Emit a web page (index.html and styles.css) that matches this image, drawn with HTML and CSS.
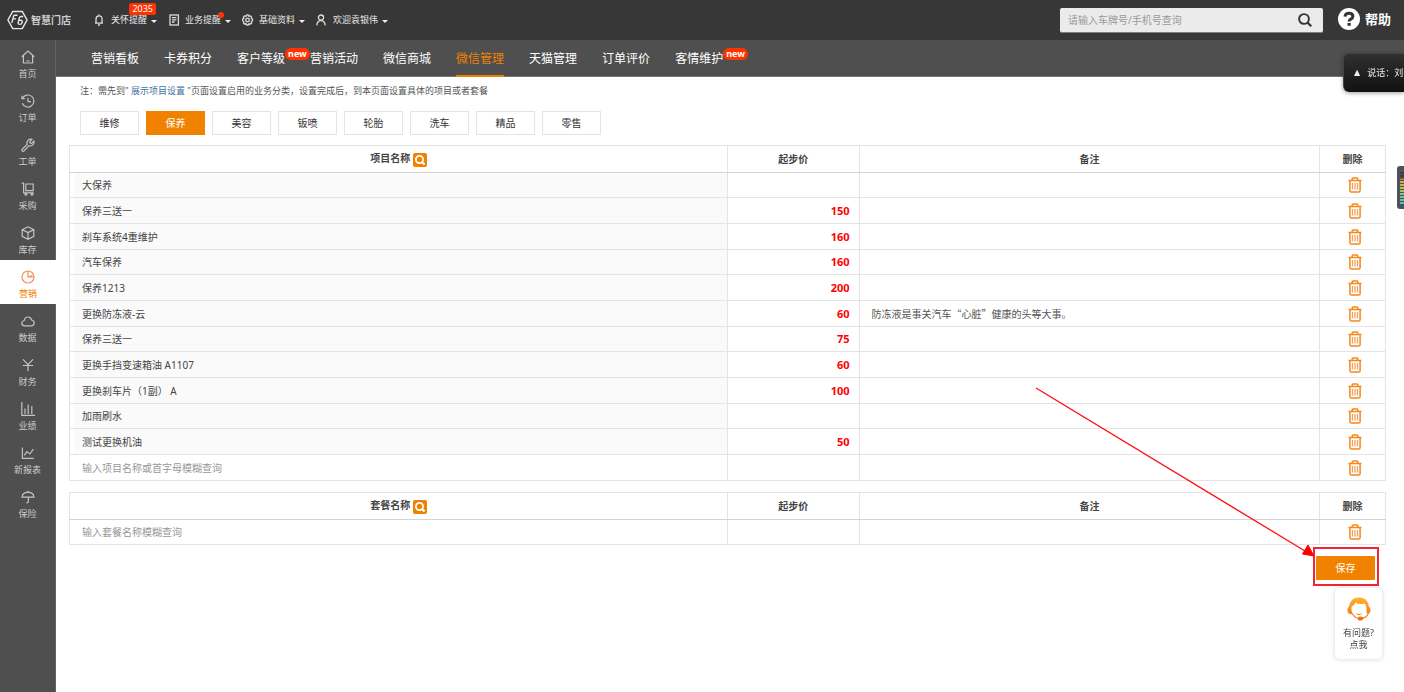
FILE: index.html
```html
<!DOCTYPE html>
<html lang="zh-CN">
<head>
<meta charset="utf-8">
<meta name="viewport" content="width=device-width, initial-scale=1">
<title>智慧门店 - 微信管理</title>
<link rel="stylesheet" href="styles.css">
</head>
<body>
<svg class="sprite" aria-hidden="true">
  <symbol id="trash" viewBox="0 0 14 16">
    <path d="M0.5 3.5H13.5M4.2 3.2V1.8Q4.2 0.9 5.1 0.9H8.9Q9.8 0.9 9.8 1.8V3.2M1.9 3.8V13.4Q1.9 15 3.4 15H10.6Q12.1 15 12.1 13.4V3.8" fill="none" stroke="#f5881a" stroke-width="1.5"/>
    <path d="M4.5 6V12.4M7 6V12.4M9.5 6V12.4" stroke="#f3a060" stroke-width="1.3"/>
  </symbol>
  <symbol id="find" viewBox="0 0 14 14">
    <rect width="14" height="14" rx="2" fill="#f18200"/>
    <circle cx="6.5" cy="6.5" r="3.6" fill="none" stroke="#fff" stroke-width="1.8"/>
    <path d="M9.2 9.2L11.6 11.6" stroke="#fff" stroke-width="2.1"/>
  </symbol>
</svg>

<header class="topbar">
  <a class="brand" href="#">
    <svg class="brand-mark" viewBox="0 0 22 20" fill="none" stroke="#e6e6e6" stroke-width="1.5" aria-hidden="true">
      <path d="M6 1H16L21 10L16 19H6L1 10Z"/>
      <path d="M11 5H8.2Q7.2 5 6.9 6L5 13M6.4 8.8H9.4M17 6.4H14.6Q13.4 6.4 13 7.7L11.8 12.4Q11.4 14.6 13.4 14.6Q15.4 14.6 15.9 12.4Q16.4 10.3 14.6 10.3H12.6"/>
    </svg>
    <span>智慧门店</span>
  </a>
  <div class="menus">
    <button class="menu">
      <svg viewBox="0 0 12 12"><path d="M1 9.200H9M2 9V5Q2 1.800 5 1.800T8 5V9M5 .4V2M4 11H6"/></svg>
      <span>关怀提醒<b class="count">2035</b></span><i class="caret"></i>
    </button>
    <button class="menu">
      <svg viewBox="0 0 12 12"><rect x="2" y="1" width="8.4" height="10"/><path d="M4 3.7H8.4M4 5.8H8.4M4 8H6.6"/></svg>
      <span>业务提醒<b class="dot"></b></span><i class="caret"></i>
    </button>
    <button class="menu">
      <svg viewBox="0 0 12 12"><path d="M5 .8H6.2L6.9 2.2L8.5 1.9L9.5 2.9L9.2 4.3L10.5 5.2V6.7L9.3 7.5L9.6 9L8.6 10L7 9.8L6.2 11H4.9L4.1 9.8L2.5 10L1.5 9L1.8 7.5L.6 6.7V5.2L1.8 4.3L1.5 2.9L2.5 1.9L4.1 2.2Z"/><circle cx="5.5" cy="6" r="1.8"/></svg>
      <span>基础资料</span><i class="caret"></i>
    </button>
    <button class="menu">
      <svg viewBox="0 0 12 12"><circle cx="5" cy="3.6" r="2.6"/><path d="M.8 11.4Q1 7 5 6.3Q9 7 9.2 11.4"/></svg>
      <span>欢迎袁银伟</span><i class="caret"></i>
    </button>
  </div>
  <form class="search">
    <input type="text" aria-label="查询" placeholder="请输入车牌号/手机号查询">
    <button type="button" aria-label="搜索"><svg viewBox="0 0 14 14" fill="none" stroke="#333"><circle cx="6" cy="6" r="4.9" stroke-width="1.9"/><path d="M9.5 9.5L13.3 13.3" stroke-width="2.2"/></svg></button>
  </form>
  <a class="help" href="#">
    <svg viewBox="0 0 22 22" aria-hidden="true"><circle cx="11" cy="11" r="11" fill="#fff"/><path d="M7 8.7Q7.2 5.2 11 5.2Q14.9 5.2 14.9 8.2Q14.9 9.8 12.8 11.1Q11.1 12.1 11.1 13.6" fill="none" stroke="#373737" stroke-width="3"/><rect x="9.5" y="15" width="3.2" height="2.8" fill="#373737"/></svg>
    <span>帮助</span>
  </a>
</header>

<div class="layout">
  <nav class="side" aria-label="主菜单">
    <a href="#"><svg viewBox="0 0 14 14"><path d="M.8 6.8L7 1L13.2 6.8M2.4 5.6V13H11.6V5.6M5.4 11H8.6"/></svg>首页</a>
    <a href="#"><svg viewBox="0 0 14 14"><path d="M1.7 4A6 6 0 1 1 1.3 9.2M1 1.8V4.6H3.8M7 4V7.6H10"/></svg>订单</a>
    <a href="#"><svg viewBox="0 0 14 14"><path d="M1.2 11.2L6.2 6.4Q5.4 3.6 7.4 1.9Q9 .7 11 1.3L8.8 3.6L9.2 5L10.6 5.4L12.9 3.1Q13.4 5.4 11.8 6.9Q10.1 8.4 7.8 7.8L3 13Q1.9 13.7 1.1 12.9Q.5 12.1 1.2 11.2Z"/></svg>工单</a>
    <a href="#"><svg viewBox="0 0 14 14"><path d="M.6 1.2H2.6V10.8H12.8M4.8 2H12.2V8.6H4.8Z"/><circle cx="4.8" cy="12.3" r=".9"/><circle cx="11" cy="12.3" r=".9"/></svg>采购</a>
    <a href="#"><svg viewBox="0 0 14 14"><path d="M7 .8L12.8 3.6V10.4L7 13.3L1.2 10.4V3.6ZM1.2 3.6L7 6.5L12.8 3.6M7 6.5V13.3"/></svg>库存</a>
    <a class="active" href="#" aria-current="page"><svg viewBox="0 0 14 14"><circle cx="7" cy="7" r="6"/><path d="M7 1V7L11.5 5.6M7 7H13"/></svg>营销</a>
    <a href="#"><svg viewBox="0 0 14 14"><path d="M3.6 11.8Q.8 11.6.8 9Q1 6.8 3.2 6.5Q3.8 3 7 3Q9.8 3 10.6 6Q13.2 6.5 13.2 9Q13 11.6 10.6 11.8Z"/></svg>数据</a>
    <a href="#"><svg viewBox="0 0 14 14"><path d="M2 1.4L7 6.6L12 1.4M7 6.600V13M1.800 7.500H12.200"/></svg>财务</a>
    <a href="#"><svg viewBox="0 0 14 14"><path d="M.8 0V13.3H14M4 12V6.6M7.2 12V2.600M10.8 12V4"/></svg>业绩</a>
    <a href="#"><svg viewBox="0 0 14 14"><path d="M1.4 1.4V12.4H12.8M3.4 9.4L5.8 5.6L8.8 8L12.4 3.2"/></svg>新报表</a>
    <a href="#"><svg viewBox="0 0 14 14"><path d="M1 7.2Q1.4 2.6 7 2.2Q12.6 2.6 13 7.2ZM7 .8V2M7.4 7.2V11.6Q7.2 13 5.4 12.6"/></svg>保险</a>
  </nav>

  <div class="page">
    <nav class="subnav" aria-label="营销">
      <a href="#">营销看板</a>
      <a href="#">卡券积分</a>
      <a href="#">客户等级<b class="new">new</b></a>
      <a href="#">营销活动</a>
      <a href="#">微信商城</a>
      <a class="active" href="#" aria-current="page">微信管理</a>
      <a href="#">天猫管理</a>
      <a href="#">订单评价</a>
      <a href="#">客情维护<b class="new">new</b></a>
    </nav>

    <main>
      <p class="note">注：需先到" <a href="#">展示项目设置</a> "页面设置启用的业务分类，设置完成后，到本页面设置具体的项目或者套餐</p>
      <div class="tabs">
        <button>维修</button>
        <button class="active">保养</button>
        <button>美容</button>
        <button>钣喷</button>
        <button>轮胎</button>
        <button>洗车</button>
        <button>精品</button>
        <button>零售</button>
      </div>

      <table class="grid">
        <thead><tr>
          <th class="col-name">项目名称 <button class="icon-btn" aria-label="查询项目"><svg class="find"><use href="#find"/></svg></button></th>
          <th class="col-price">起步价</th><th class="col-memo">备注</th><th class="col-del">删除</th>
        </tr></thead>
        <tbody>
          <tr><td class="name">大保养</td><td class="price"></td><td class="memo"></td><td class="del"><button class="icon-btn" aria-label="删除"><svg class="trash"><use href="#trash"/></svg></button></td></tr>
          <tr><td class="name">保养三送一</td><td class="price">150</td><td class="memo"></td><td class="del"><button class="icon-btn" aria-label="删除"><svg class="trash"><use href="#trash"/></svg></button></td></tr>
          <tr><td class="name">刹车系统4重维护</td><td class="price">160</td><td class="memo"></td><td class="del"><button class="icon-btn" aria-label="删除"><svg class="trash"><use href="#trash"/></svg></button></td></tr>
          <tr><td class="name">汽车保养</td><td class="price">160</td><td class="memo"></td><td class="del"><button class="icon-btn" aria-label="删除"><svg class="trash"><use href="#trash"/></svg></button></td></tr>
          <tr><td class="name">保养1213</td><td class="price">200</td><td class="memo"></td><td class="del"><button class="icon-btn" aria-label="删除"><svg class="trash"><use href="#trash"/></svg></button></td></tr>
          <tr><td class="name">更换防冻液-云</td><td class="price">60</td><td class="memo">防冻液是事关汽车“心脏”健康的头等大事。</td><td class="del"><button class="icon-btn" aria-label="删除"><svg class="trash"><use href="#trash"/></svg></button></td></tr>
          <tr><td class="name">保养三送一</td><td class="price">75</td><td class="memo"></td><td class="del"><button class="icon-btn" aria-label="删除"><svg class="trash"><use href="#trash"/></svg></button></td></tr>
          <tr><td class="name">更换手挡变速箱油 A1107</td><td class="price">60</td><td class="memo"></td><td class="del"><button class="icon-btn" aria-label="删除"><svg class="trash"><use href="#trash"/></svg></button></td></tr>
          <tr><td class="name">更换刹车片（1副） A</td><td class="price">100</td><td class="memo"></td><td class="del"><button class="icon-btn" aria-label="删除"><svg class="trash"><use href="#trash"/></svg></button></td></tr>
          <tr><td class="name">加雨刷水</td><td class="price"></td><td class="memo"></td><td class="del"><button class="icon-btn" aria-label="删除"><svg class="trash"><use href="#trash"/></svg></button></td></tr>
          <tr><td class="name">测试更换机油</td><td class="price">50</td><td class="memo"></td><td class="del"><button class="icon-btn" aria-label="删除"><svg class="trash"><use href="#trash"/></svg></button></td></tr>
          <tr><td class="entry"><input type="text" aria-label="项目名称" placeholder="输入项目名称或首字母模糊查询"></td><td class="price"></td><td class="memo"></td><td class="del"><button class="icon-btn" aria-label="删除"><svg class="trash"><use href="#trash"/></svg></button></td></tr>
        </tbody>
      </table>

      <table class="grid">
        <thead><tr>
          <th class="col-name">套餐名称 <button class="icon-btn" aria-label="查询套餐"><svg class="find"><use href="#find"/></svg></button></th>
          <th class="col-price">起步价</th><th class="col-memo">备注</th><th class="col-del">删除</th>
        </tr></thead>
        <tbody>
          <tr><td class="entry"><input type="text" aria-label="套餐名称" placeholder="输入套餐名称模糊查询"></td><td class="price"></td><td class="memo"></td><td class="del"><button class="icon-btn" aria-label="删除"><svg class="trash"><use href="#trash"/></svg></button></td></tr>
        </tbody>
      </table>

      <div class="actions">
        <div class="marked">
          <button class="save">保存</button>
          <svg class="arrow" viewBox="0 0 280 170" aria-hidden="true"><path d="M1 1L270 164" stroke="#f11" stroke-width="1.4"/><path d="M279 169L267.500 167L273 158Z" fill="#f00" stroke="#f00"/></svg>
        </div>
      </div>
    </main>
  </div>
</div>

<button class="speech"><span class="up">▲</span><span>说话：刘</span></button>
<div class="meter" aria-hidden="true"><span></span></div>
<button class="chat">
  <svg viewBox="0 0 24 24" aria-hidden="true">
    <defs><linearGradient id="hair" x2="0" y2="1"><stop stop-color="#ffb52b"/><stop offset="1" stop-color="#f67f1e"/></linearGradient></defs>
    <path d="M3 17Q.4 16.500 .4 13Q.4 10.500 2 9.800Q3.300 .5 12 .5Q20.700 .5 22 9.800Q23.600 10.500 23.600 13Q23.600 16 21 17L19.500 15.500Q20 10 18 6.500Q11.500 8 8.500 5.500Q7.500 8.500 4.500 9.500Q4 13 5.500 17Q4 17.500 3 17Z" fill="url(#hair)"/>
    <path d="M21.500 15.500Q20 21 14.500 21.500M5.200 16.500Q7 20 10 21" fill="none" stroke="#f58220" stroke-width="1.2"/>
    <ellipse cx="13.300" cy="21.500" rx="2.800" ry="2" fill="#f0701d"/>
    <path d="M9.500 16.800Q12 18.500 14.500 16.800" fill="none" stroke="#f58220"/>
  </svg>
  <span>有问题?</span><span>点我</span>
</button>
</body>
</html>
```

FILE: styles.css
```css
* { box-sizing: border-box; }
body {
  margin: 0;
  min-height: 100vh;
  display: flex;
  flex-direction: column;
  background: #fff;
  color: #444;
  font: 10px/14px "Noto Sans", "Noto Sans CJK SC", sans-serif;
}
a { color: inherit; text-decoration: none; }
button, input { font: inherit; color: inherit; border: 0; padding: 0; background: none; }
button { cursor: pointer; }
.sprite { position: absolute; width: 0; height: 0; }

/* Top bar */
.topbar {
  display: flex;
  align-items: center;
  height: 40px;
  padding: 0 13px 0 7px;
  background: #373737;
  color: #e8e8e8;
}
.brand { display: flex; align-items: center; gap: 3px; width: 87px; font-weight: 700; color: #ccc; }
.brand-mark { width: 21px; height: 20px; }
.menus { display: flex; gap: 11px; font-size: 9px; line-height: 12px; }
.menu { display: flex; align-items: center; }
.menu svg { width: 12px; height: 12px; margin-right: 5px; fill: none; stroke: #ddd; stroke-width: 1.3; }
.menu span { position: relative; }
.caret { margin: 3px 0 0 4px; border: 3px solid transparent; border-top-color: #eee; border-bottom: 0; }
.count {
  position: absolute;
  top: -11px;
  right: -9px;
  padding: 0 3px;
  border-radius: 2px;
  background: #ff3300;
  color: #fff;
  font-weight: 400;
  line-height: 12px;
}
.dot { position: absolute; top: -2px; right: -3px; width: 6px; height: 6px; border-radius: 50%; background: #ff3300; }
.search {
  display: flex;
  align-items: center;
  width: 263px;
  height: 25px;
  margin-left: auto;
  padding: 0 11px 0 8px;
  border-radius: 2px;
  background: #ebebeb;
  color: #333;
  border-bottom: 1px solid #71828c;
}
.search input { flex: 1; min-width: 0; outline: 0; }
.search svg { display: block; width: 14px; height: 14px; }
.help { display: flex; align-items: center; gap: 5px; margin-left: 15px; padding-bottom: 3px; color: #fff; font-size: 13px; font-weight: 700; }
.help svg { width: 22px; height: 22px; }
::placeholder { color: #999; opacity: 1; }

/* Sidebar */
.layout { display: flex; flex: 1; }
.side { width: 56px; flex: none; background: #4f4f4f; border-right: 1px solid #636363; color: #ccc; font-size: 9px; }
.side a { display: flex; flex-direction: column; align-items: center; gap: 3px; height: 44px; padding-top: 10px; line-height: 13px; }
.side svg { width: 14px; height: 14px; fill: none; stroke: #c4c4c4; stroke-width: 1.2; }
.side .active { background: #fff; color: #f18200; margin-right: -1px; }
.side .active svg { stroke: #f58f62; }

/* Section navigation */
.page { flex: 1; min-width: 0; }
.subnav {
  display: flex;
  gap: 25px;
  height: 37px;
  padding-left: 35px;
  background: #4f4f4f;
  border-bottom: 1px solid #757575;
  color: #fff;
  font-size: 12px;
  line-height: 38px;
}
.subnav a { position: relative; }
.subnav .active { color: #f18200; height: 37px; border-bottom: 2px solid #f18200; }
.new {
  position: absolute;
  top: 8px;
  left: 48px;
  padding: 0 3px;
  border-radius: 7px;
  background: #ff3300;
  font-size: 9px;
  line-height: 12px;
}

main { padding: 6px 18px 0 13px; }
.note { margin: 0 0 13px 11px; font-size: 9px; line-height: 15px; color: #555; }
.note a { color: #40719c; }
.tabs { display: flex; gap: 7px; margin: 0 0 10px 11px; }
.tabs button { width: 59px; height: 24px; border: 1px solid #e4e4e4; background: #fff; color: #333; }
.tabs .active { background: #f18200; border-color: #f18200; color: #fff; }

/* Data tables */
.grid { width: 100%; margin-bottom: 11px; border-collapse: collapse; table-layout: fixed; }
.grid th, .grid td { border: 1px solid #e4e4e4; padding: 0; }
.grid th { height: 27px; border-bottom-color: #d4d4d4; color: #444; font-weight: 700; }
.grid td { height: 26px; }
.grid tr:nth-child(3n+1) td { height: 25px; }
.col-name { width: 50%; }
.col-price { width: 10%; }
.col-memo { width: 35%; }
.col-del { width: 5%; }
.grid .name { padding-left: 12px; background: linear-gradient(to right, #fff 4px, #fafafa 4px); }
.grid .entry { padding-left: 12px; }
.entry input { display: block; width: 100%; height: 14px; outline: 0; }
.grid .price { padding-right: 9px; text-align: right; color: #f00; font-size: 11px; font-weight: 700; }
.grid .memo { padding-left: 12px; color: #555; font-family: "Noto Sans CJK SC", sans-serif; }
.grid .del { padding-left: 4px; text-align: center; }
.icon-btn { vertical-align: middle; }
.icon-btn svg { display: block; }
.find { width: 14px; height: 14px; }
.trash { width: 14px; height: 16px; }

.actions { display: flex; justify-content: flex-end; margin-top: -9px; padding-right: 7px; }
.marked { position: relative; padding: 7px 2px 4px 1px; border: 2px solid #f22435; }
.save { display: block; width: 59px; height: 24px; border-radius: 1px; background: #f18200; color: #fff; }
.arrow { position: absolute; right: 62px; bottom: 27px; width: 280px; height: 170px; pointer-events: none; }

/* Floating widgets */
.speech {
  position: fixed;
  top: 53px;
  right: 0;
  width: 61px;
  height: 39px;
  display: flex;
  align-items: center;
  gap: 7px;
  padding-left: 10px;
  overflow: hidden;
  white-space: nowrap;
  border: solid #444;
  border-width: 1px 0 0 1px;
  border-radius: 6px 0 0 6px;
  background: linear-gradient(#303030, #111);
  box-shadow: 0 1px 4px rgba(0, 0, 0, .4);
  color: #eee;
  font-size: 9px;
}
.up { font-size: 8px; font-family: "DejaVu Sans", sans-serif; }
.meter { position: fixed; top: 166px; right: 0; width: 7px; height: 43px; padding: 6px 0 5px 3px; border-radius: 3px 0 0 3px; background: #50515f; }
.meter span {
  display: block;
  height: 32px;
  background:
    repeating-linear-gradient(transparent 0 2px, #50515f 2px 3px),
    linear-gradient(#3c3d48 6px, #e5a24a 8px, #b5c44e 50%, #43c5b8);
}
.chat {
  position: fixed;
  top: 587px;
  right: 21px;
  width: 49px;
  height: 73px;
  display: flex;
  flex-direction: column;
  align-items: center;
  border: 1px solid #eee;
  border-radius: 6px;
  background: #fff;
  box-shadow: 0 0 4px rgba(0, 0, 0, .12);
  padding-top: 9px;
  font-size: 9px;
  line-height: 12px;
}
.chat svg { width: 24px; height: 24px; margin-bottom: 6px; }
```
